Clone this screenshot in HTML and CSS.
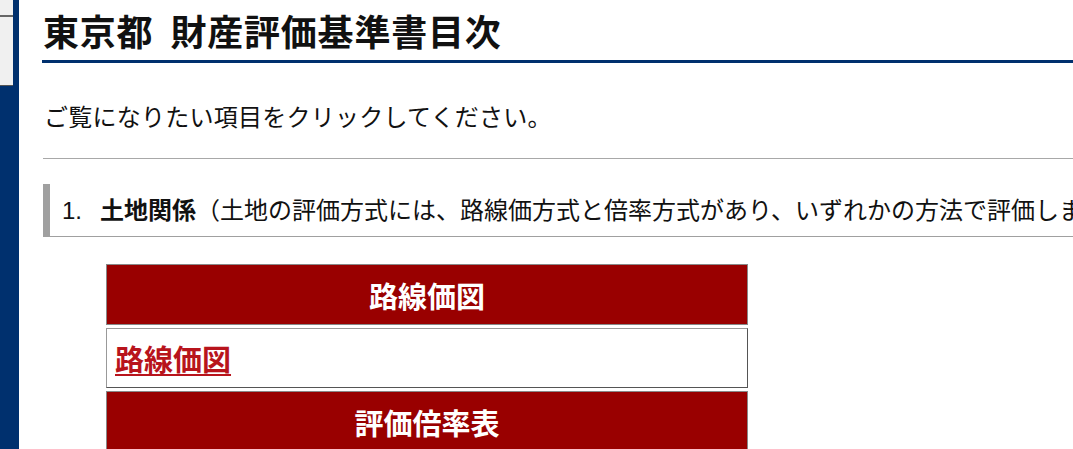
FILE: index.html
```html
<!DOCTYPE html>
<html lang="ja">
<head>
<meta charset="utf-8">
<title>東京都 財産評価基準書目次</title>
<link rel="stylesheet" href="styles.css">
</head>
<body>
<aside class="rail">
  <div class="tab"><div class="tab-top"></div></div>
</aside>
<main class="content">
  <h1 class="title">東京都<span class="gap"></span>財産評価基準書目次</h1>
  <p class="lead">ご覧になりたい項目をクリックしてください。</p>
  <hr class="rule">
  <h2 class="section"><span class="num">1.</span><strong>土地関係</strong>（土地の評価方式には、路線価方式と倍率方式があり、いずれかの方法で評価します。）</h2>
  <table class="menu">
    <tr><th class="menu-head">路線価図</th></tr>
    <tr><td class="menu-cell"><a href="#" class="menu-link">路線価図</a></td></tr>
    <tr><th class="menu-head">評価倍率表</th></tr>
    <tr><td class="menu-cell"><a href="#" class="menu-link">評価倍率表</a></td></tr>
  </table>
</main>
</body>
</html>
```

FILE: styles.css
```css
html, body {
  margin: 0;
  padding: 0;
  height: 449px;
  overflow: hidden;
  background: #fff;
}
body {
  display: flex;
  font-family: "Noto Sans CJK JP", "Noto Sans", sans-serif;
  color: #111;
}
.rail {
  width: 19px;
  flex-shrink: 0;
  background: #00306e;
}
.tab {
  width: 13px;
  height: 86px;
  box-sizing: border-box;
  background: #f0f0f0;
  border-bottom: 1px solid #555;
}
.tab-top {
  height: 15px;
  border-bottom: 2px solid #666;
}
.content {
  flex: 1;
  min-width: 0;
  padding-left: 23px;
  overflow: hidden;
}
.title {
  margin: 0;
  padding: 7px 0 6px 1px;
  font-size: 36px;
  line-height: 47px;
  letter-spacing: 0.8px;
  font-weight: bold;
  white-space: nowrap;
  border-bottom: 3px solid #00306e;
}
.gap {
  display: inline-block;
  width: 17px;
}
.lead {
  margin: 37px 0 0 2px;
  font-size: 24px;
  line-height: 32px;
  letter-spacing: 0.25px;
  white-space: nowrap;
}
.rule {
  margin: 26px 0 0 1px;
  height: 0;
  border: 0;
  border-top: 1px solid #a8a8a8;
}
.section {
  margin: 25px 0 0 1px;
  padding-left: 12px;
  font-size: 24px;
  line-height: 50px;
  font-weight: normal;
  white-space: nowrap;
  border-left: 7px solid #a0a0a0;
  border-bottom: 1px solid #a0a0a0;
}
.num {
  font-family: "Liberation Sans", Arial, sans-serif;
  display: inline-block;
  width: 38px;
}
.section strong {
  font-weight: bold;
}
.menu {
  margin: 24px 0 0 64px;
  width: 642px;
  border-collapse: separate;
  border-spacing: 0 3px;
}
.menu-head {
  height: 59px;
  padding: 0;
  background: #990000;
  color: #fff;
  font-size: 29px;
  font-weight: bold;
  text-align: center;
  border: 1px solid #888;
}
.menu-cell {
  height: 58px;
  padding: 0 0 0 8px;
  background: #fff;
  border-top: 1px solid #999;
  border-left: 1px solid #999;
  border-right: 1px solid #555;
  border-bottom: 1px solid #555;
}
.menu-link {
  color: #b8141c;
  font-size: 29px;
  font-weight: bold;
  text-decoration: underline;
  text-decoration-thickness: 2px;
  text-underline-offset: 3px;
}
```
